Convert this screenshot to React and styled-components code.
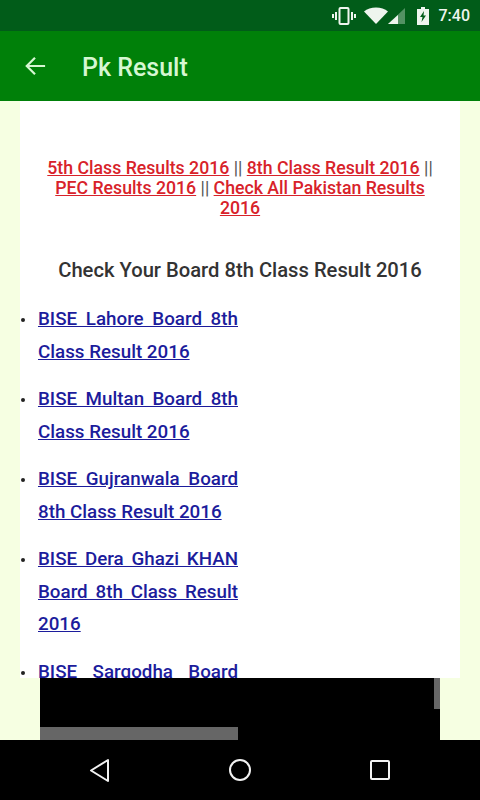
import React from "react";
import styled, { createGlobalStyle } from "styled-components";

const GlobalStyle = createGlobalStyle`
  html, body {
    margin: 0;
    padding: 0;
    width: 480px;
    height: 800px;
    overflow: hidden;
    font-family: Roboto, "Liberation Sans", sans-serif;
  }
`;

const Screen = styled.div`
  width: 480px;
  height: 800px;
  display: flex;
  flex-direction: column;
  background: #f6ffe2;
`;

const StatusBar = styled.div`
  height: 31px;
  background: #015c19;
  display: flex;
  align-items: center;
  justify-content: flex-end;
  gap: 8px;
  padding-right: 10px;
  color: #eef5ee;
`;

const Clock = styled.span`
  font-size: 16px;
  font-weight: 500;
  margin-left: 2px;
`;

const Toolbar = styled.header`
  height: 70px;
  background: #008009;
  display: flex;
  align-items: center;
  padding-left: 24px;
  gap: 36px;
  color: #d6f7d2;
`;

const Title = styled.h1`
  margin: 0;
  font-size: 25px;
  font-weight: 500;
  position: relative;
  top: 1px;
`;

const Panel = styled.main`
  height: 577px;
  margin: 0 20px;
  background: #fff;
  overflow: hidden;
  padding-top: 57px;
  box-sizing: border-box;
`;

const TopLinks = styled.p`
  margin: 0 auto;
  width: 396px;
  text-align: center;
  font-size: 17.7px;
  font-weight: 500;
  line-height: 20px;
  color: #555;
`;

const RedLink = styled.a`
  color: #d8222a;
  text-decoration: underline;
`;

const Pipes = styled.span`
  font-weight: 400;
`;

const Heading = styled.h2`
  margin: 40px 0 0;
  text-align: center;
  font-size: 20.2px;
  font-weight: 500;
  line-height: 24px;
  color: #333;
`;

const BoardList = styled.ul`
  margin: 21px 0 0;
  padding: 0 0 0 18px;
  width: 200px;
  list-style: none;
`;

const BoardItem = styled.li`
  position: relative;
  font-size: 18.8px;
  font-weight: 500;
  line-height: 32.5px;
  margin-bottom: 15px;
  text-align: justify;

  &::before {
    content: "";
    position: absolute;
    left: -17px;
    top: 15px;
    width: 4px;
    height: 4px;
    border-radius: 50%;
    background: #222;
  }
`;

const BlueLink = styled.a`
  color: #1c1c9c;
  text-decoration: underline;
`;

const AdBox = styled.div`
  position: relative;
  height: 62px;
  margin: 0 40px;
  background: #000;
`;

const ScrollThumbY = styled.div`
  position: absolute;
  top: 0;
  right: 0;
  width: 6px;
  height: 31px;
  background: #666;
`;

const ScrollThumbX = styled.div`
  position: absolute;
  left: 0;
  bottom: 0;
  width: 198px;
  height: 13px;
  background: #666;
`;

const NavBar = styled.nav`
  height: 60px;
  background: #000;
  display: flex;
  align-items: center;
  justify-content: space-between;
  padding: 0 88px;
`;

const boards = [
  "BISE Lahore Board 8th Class Result 2016",
  "BISE Multan Board 8th Class Result 2016",
  "BISE Gujranwala Board 8th Class Result 2016",
  "BISE Dera Ghazi KHAN Board 8th Class Result 2016",
  "BISE Sargodha Board 8th Class Result 2016",
];

export default function App() {
  return (
    <Screen>
      <GlobalStyle />
      <StatusBar>
        <svg width="24" height="20" viewBox="0 0 24 20" fill="none" stroke="#eef5ee" strokeWidth="2">
          <rect x="7.5" y="2" width="9" height="16" rx="1" />
          <path d="M4 6v8M1 8v4M20 6v8M23 8v4" />
        </svg>
        <svg width="45" height="18" viewBox="0 0 45 18">
          <path d="M0 4.5C6-1 18-1 24 4.500L12 17z" fill="#eef5ee" />
          <path d="M24 17L41 1v16z" fill="#eef5ee" fillOpacity="0.35" />
          <path d="M24 17l10-9v9z" fill="#eef5ee" />
        </svg>
        <svg width="12" height="20" viewBox="0 0 12 20">
          <path d="M4 1h4v2h4v16H0V3h4z" fill="#eef5ee" />
          <path d="M7 5L3 11h2.500l-1 5L9 9.500H6.500z" fill="#015c19" />
        </svg>
        <Clock>7:40</Clock>
      </StatusBar>
      <Toolbar>
        <svg width="22" height="22" viewBox="0 0 24 24" fill="none" stroke="#d6f7d2" strokeWidth="2.400">
          <path d="M23 12H3M12 3l-9 9 9 9" />
        </svg>
        <Title>Pk Result</Title>
      </Toolbar>
      <Panel>
        <TopLinks>
          <RedLink>5th Class Results 2016</RedLink> <Pipes>||</Pipes>{" "}
          <RedLink>8th Class Result 2016</RedLink> <Pipes>||</Pipes>{" "}
          <RedLink>PEC Results 2016</RedLink> <Pipes>||</Pipes>{" "}
          <RedLink>Check All Pakistan Results 2016</RedLink>
        </TopLinks>
        <Heading>Check Your Board 8th Class Result 2016</Heading>
        <BoardList>
          {boards.map((b) => (
            <BoardItem key={b}>
              <BlueLink>{b}</BlueLink>
            </BoardItem>
          ))}
        </BoardList>
      </Panel>
      <AdBox>
        <ScrollThumbY />
        <ScrollThumbX />
      </AdBox>
      <NavBar>
        <svg width="24" height="24" viewBox="0 0 24 24" fill="none" stroke="#f2f2f2" strokeWidth="2" strokeLinejoin="round">
          <path d="M20 2v21L3 12.500z" />
        </svg>
        <svg width="24" height="24" viewBox="0 0 24 24" fill="none" stroke="#f2f2f2" strokeWidth="2">
          <circle cx="12" cy="12" r="10" />
        </svg>
        <svg width="24" height="24" viewBox="0 0 24 24" fill="none" stroke="#f2f2f2" strokeWidth="2" strokeLinejoin="round">
          <rect x="3" y="3" width="18" height="18" rx="1" />
        </svg>
      </NavBar>
    </Screen>
  );
}
